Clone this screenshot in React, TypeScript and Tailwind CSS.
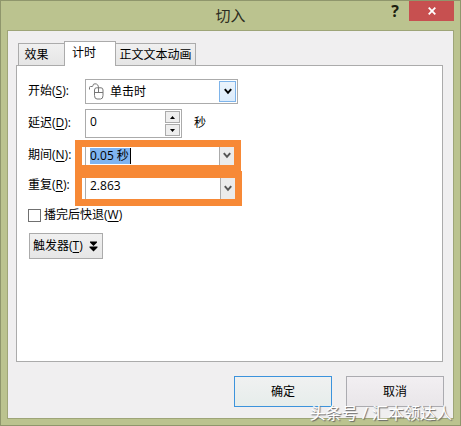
import { useState, type FC, type ReactNode } from "react";

const ChevronIcon: FC<{ className?: string }> = ({ className }) => (
  <svg
    className={className}
    width="8"
    height="7"
    viewBox="0 0 8 7"
    fill="none"
    stroke="currentColor"
    strokeWidth="2"
  >
    <path d="M0.8 1.2 4 4.8 7.2 1.2" />
  </svg>
);

const MouseIcon: FC = () => (
  <svg
    width="16"
    height="18"
    viewBox="0 0 16 18"
    fill="none"
    stroke="#777"
    strokeWidth="1"
  >
    <path d="M0.5 6.5V4.5Q0.5 3.5 1.5 3.5H3Q4 3.5 4 2.5Q4 0.8 6 0.8Q9.5 0.8 9.5 5" />
    <path d="M5.5 7Q5.5 4.8 7.5 4.8H12Q14 4.8 14 7V12.5Q14 16 11.5 16H8Q5.5 16 5.5 12.5Z" />
    <path d="M5.5 9.5H14M9.5 5V9.5" />
  </svg>
);

const DoubleDownIcon: FC = () => (
  <svg width="9" height="11" viewBox="0 0 9 11" fill="#000">
    <path d="M1 0.5H8V1.5L4.5 5 1 1.5ZM0.5 5.5H8.5V6.5L4.5 10.5 0.5 6.5Z" />
  </svg>
);

const FieldLabel: FC<{ htmlFor: string; text: string; hotkey: string }> = ({
  htmlFor,
  text,
  hotkey,
}) => (
  <label htmlFor={htmlFor} className="w-[57px] shrink-0 pb-0.5 whitespace-nowrap">
    {text}(<u className="underline-offset-2">{hotkey}</u>):
  </label>
);

// editable combo box with the orange highlight frame around it
const ComboFrame: FC<{
  className: string;
  label: string;
  children: ReactNode;
}> = ({ className, label, children }) => (
  <div className={`-ml-[10px] flex border-7 border-[#f78936] bg-white ${className}`}>
    <div className="ml-[3px] flex grow items-center border-l border-[#ababab] pl-1">
      {children}
    </div>
    <button
      type="button"
      aria-label={label}
      className="flex w-[15px] items-center justify-center border-l border-[#ababab] bg-[#ebebeb] text-[#555]"
    >
      <ChevronIcon />
    </button>
  </div>
);

export default function App() {
  const [start, setStart] = useState("click");
  const [delay, setDelay] = useState(0);
  const [duration, setDuration] = useState("0.05 秒");
  const [repeat, setRepeat] = useState("2.863");
  const [rewind, setRewind] = useState(false);

  return (
    <div className="relative flex min-h-screen flex-col border border-[#8f966c] bg-[#bbc38f] px-1.5 pb-1.5 font-['Open_Sans','Noto_Sans_CJK_SC',sans-serif] text-xs leading-4 text-black">
      <header className="flex h-[29px] items-start">
        <div className="w-[65px]" />
        <h1 className="grow pt-1 text-center text-[15px] leading-5 text-[#2c2c20]">
          切入
        </h1>
        <button
          type="button"
          aria-label="帮助"
          className="mr-2 w-3 pt-0.5 text-center text-base leading-4 font-bold text-[#1d200f]"
        >
          ?
        </button>
        <button
          type="button"
          aria-label="关闭"
          className="flex h-5 w-[45px] items-center justify-center bg-[#c75050]"
        >
          <svg
            width="8"
            height="8"
            viewBox="0 0 8 8"
            stroke="#fff"
            strokeWidth="1.8"
          >
            <path d="M0.7 0.7 7.3 7.3M7.3 0.7 0.7 7.3" />
          </svg>
        </button>
      </header>

      <main className="flex grow flex-col border border-[#9ea578] bg-[#f0eff0] px-2 pt-[10px] pb-[11px]">
        <div role="tablist" className="flex items-end pl-0.5">
          <button
            type="button"
            role="tab"
            aria-selected="false"
            className="h-[22px] w-[46px] border border-r-0 border-b-0 border-[#ababab] bg-linear-to-b from-[#f0f0f0] to-[#e5e5e5] pr-2.5"
          >
            效果
          </button>
          <button
            type="button"
            role="tab"
            aria-selected="true"
            className="relative -mb-px h-[25px] w-[52px] border border-b-0 border-[#ababab] bg-white pr-3 pb-0.5"
          >
            计时
          </button>
          <button
            type="button"
            role="tab"
            aria-selected="false"
            className="h-[22px] w-[80px] border border-b-0 border-l-0 border-[#ababab] bg-linear-to-b from-[#f0f0f0] to-[#e5e5e5] whitespace-nowrap"
          >
            正文文本动画
          </button>
        </div>

        <section className="mr-[2px] grow border border-[#ababab] bg-white pt-[13px] pl-[11px]">
          <div className="flex h-[25px] items-center">
            <FieldLabel htmlFor="start" text="开始" hotkey="S" />
            <div className="relative flex h-[25px] w-[153px] items-center border border-[#ababab] pl-[3px]">
              <MouseIcon />
              <select
                id="start"
                value={start}
                onChange={(e) => setStart(e.target.value)}
                className="h-full grow appearance-none pl-[5px] outline-none"
              >
                <option value="click">单击时</option>
              </select>
              <span className="pointer-events-none absolute inset-y-px right-px flex w-[17px] items-center justify-center border border-[#7eb4ea] bg-linear-to-b from-[#ecf4fc] to-[#dcecfc]">
                <ChevronIcon />
              </span>
            </div>
          </div>

          <div className="mt-[5px] flex h-[29px] items-center">
            <FieldLabel htmlFor="delay" text="延迟" hotkey="D" />
            <div className="flex h-[29px] w-[97px] border border-[#ababab] p-px">
              <input
                id="delay"
                value={delay}
                onChange={(e) => setDelay(Number(e.target.value) || 0)}
                className="mb-1 w-0 grow pl-[3px] outline-none"
              />
              <div className="flex w-[15px] flex-col gap-px">
                <button
                  type="button"
                  aria-label="增加"
                  onClick={() => setDelay(delay + 1)}
                  className="flex grow items-center justify-center border border-[#ababab] bg-[#eee]"
                >
                  <svg width="5" height="3" viewBox="0 0 5 3">
                    <path d="M0 3 2.5 0 5 3Z" />
                  </svg>
                </button>
                <button
                  type="button"
                  aria-label="减少"
                  onClick={() => setDelay(Math.max(0, delay - 1))}
                  className="flex grow items-center justify-center border border-[#ababab] bg-[#eee]"
                >
                  <svg width="5" height="3" viewBox="0 0 5 3">
                    <path d="M0 0 2.5 3 5 0Z" />
                  </svg>
                </button>
              </div>
            </div>
            <span className="ml-3 pb-0.5">秒</span>
          </div>

          <div className="mt-0.5 flex h-[31px] items-center">
            <FieldLabel htmlFor="duration" text="期间" hotkey="N" />
            <ComboFrame className="h-8 w-[166px]" label="选择期间">
              <input
                id="duration"
                value={duration}
                onChange={(e) => setDuration(e.target.value)}
                className="h-4 w-[41px] border-r border-black bg-[#80b4f0] outline-none"
              />
            </ComboFrame>
          </div>

          <div className="flex h-[35px] items-start">
            <div className="w-[57px] shrink-0 pt-1.5">
              <FieldLabel htmlFor="repeat" text="重复" hotkey="R" />
            </div>
            <ComboFrame className="h-[35px] w-[167px]" label="选择重复">
              <input
                id="repeat"
                value={repeat}
                onChange={(e) => setRepeat(e.target.value)}
                className="mb-1.5 h-4 w-24 outline-none"
              />
            </ComboFrame>
          </div>

          <label className="mt-px flex h-4 items-center gap-[3px]">
            <input
              type="checkbox"
              checked={rewind}
              onChange={(e) => setRewind(e.target.checked)}
              className="size-[13px] appearance-none border border-[#707070] bg-white checked:bg-[#707070]"
            />
            <span>
              播完后快退(<u className="underline-offset-2">W</u>)
            </span>
          </label>

          <button
            type="button"
            className="mt-[10px] ml-px flex h-[26px] w-[74px] items-center gap-1.5 border border-[#ababab] bg-linear-to-b from-[#f0f0f0] to-[#e6e6e6] pl-[3px] whitespace-nowrap"
          >
            <span>
              触发器(<u className="underline-offset-2">T</u>)
            </span>
            <DoubleDownIcon />
          </button>
        </section>

        <div className="mt-[14px] mr-px flex justify-end gap-[14px]">
          <button
            type="button"
            className="h-[31px] w-[98px] border border-[#3c93dc] bg-linear-to-b from-[#f0f1f1] to-[#e6edeb]"
          >
            确定
          </button>
          <button
            type="button"
            className="h-[31px] w-[98px] border border-[#ababb0] bg-linear-to-b from-[#f2eff2] to-[#e9e6e9]"
          >
            取消
          </button>
        </div>
      </main>

      <div className="pointer-events-none absolute right-2 bottom-0.5 text-base leading-5 whitespace-pre text-white [text-shadow:1px_1px_1px_#666]">
        头条号 / 汇本领达人
      </div>
    </div>
  );
}
